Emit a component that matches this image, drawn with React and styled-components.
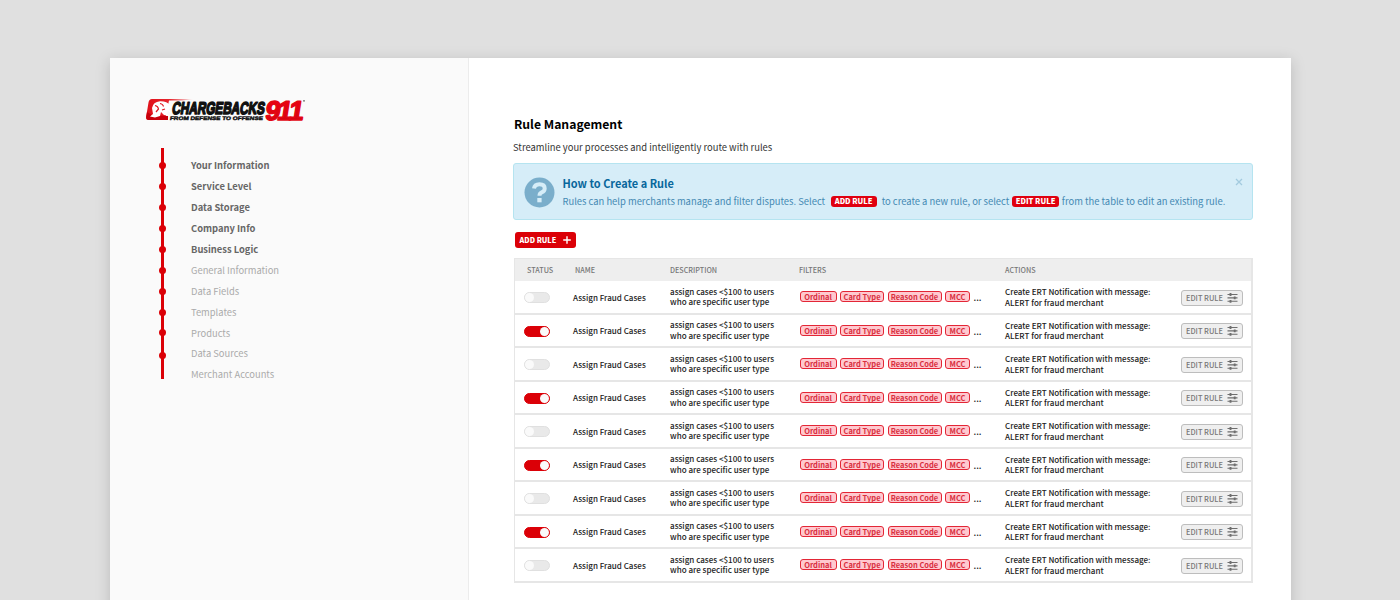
import React from 'react';
import styled, { createGlobalStyle } from 'styled-components';

const Global = createGlobalStyle`
  * { box-sizing: border-box; }
  html, body { margin: 0; height: 600px; overflow: hidden; }
  body {
    background: #e0e0e0;
    font-family: "Noto Sans CJK SC", "Noto Sans", sans-serif;
    color: #222;
  }
`;

const Page = styled.div`
  height: 600px;
  padding: 58px 109px 0 110px;
  overflow: hidden;
`;

const Card = styled.div`
  display: flex;
  height: 640px;
  background: #fff;
  box-shadow: 0 3px 14px rgba(0, 0, 0, 0.17);
`;

const Sidebar = styled.aside`
  width: 359px;
  flex: none;
  background: #fafafa;
  border-right: 1px solid #ececec;
  padding: 38px 0 0 34px;
`;

const Logo = styled.svg`
  display: block;
  width: 164px;
  height: 28px;
  overflow: visible;
`;

const Nav = styled.nav`
  display: flex;
  margin: 24px 0 0 15px;
`;

const Rail = styled.div`
  width: 7px;
  height: 231px;
  padding-top: 14px;
  background: linear-gradient(#db0007, #db0007) 2px 0 / 3px 100% no-repeat;
`;

const Dot = styled.div`
  width: 7px;
  height: 7px;
  border-radius: 50%;
  background: #db0007;
  margin-bottom: ${(p) => p.$gap}px;
`;

const NavList = styled.div`
  margin: 7px 0 0 25px;
`;

const NavItem = styled.div`
  height: 20.95px;
  line-height: 21.6px;
  font-size: 9.4px;
  white-space: nowrap;
  font-weight: ${(p) => (p.$active ? 700 : 400)};
  color: ${(p) => (p.$active ? '#666' : '#aaa')};
`;

const Main = styled.main`
  padding: 55px 0 0 44px;
  width: 784px;
`;

const Title = styled.h1`
  margin: 0 0 0 1px;
  font-size: 12.2px;
  line-height: 22px;
  font-weight: 700;
  color: #000;
`;

const Subtitle = styled.p`
  margin: 3px 0 0;
  font-size: 9.42px;
  line-height: 18px;
  color: #333;
`;

const Notice = styled.section`
  display: flex;
  position: relative;
  margin-top: 7px;
  height: 57px;
  width: 740px;
  padding: 13px 0 0 10px;
  background: #d6edf8;
  border: 1px solid #b5e4f0;
  border-radius: 3px;
`;

const NoticeBody = styled.div`
  margin: -1px 0 0 7.5px;
`;

const NoticeTitle = styled.h2`
  margin: -2px 0 0;
  font-size: 10.95px;
  line-height: 18px;
  font-weight: 700;
  color: #08679c;
`;

const NoticeText = styled.div`
  display: flex;
  align-items: center;
  height: 18px;
  font-size: 9.41px;
  line-height: 18px;
  white-space: nowrap;
  color: #4489b3;
`;

const Pill = styled.span`
  flex: none;
  height: 11px;
  line-height: 10.6px;
  width: ${(p) => p.$w}px;
  text-align: center;
  margin: 0 ${(p) => p.$after}px 0 ${(p) => p.$before}px;
  border-radius: 3px;
  background: #e0000f;
  color: #fff;
  font-size: 7.5px;
  font-weight: 900;
`;

const Close = styled.svg`
  position: absolute;
  top: 14px;
  right: 9px;
  width: 8px;
  height: 8px;
`;

const AddButton = styled.button`
  display: flex;
  align-items: center;
  justify-content: space-between;
  margin: 12px 0 0 2px;
  width: 61px;
  height: 16px;
  padding: 0 5.5px 0 4.5px;
  border: 0;
  border-radius: 3px;
  background: #db0007;
  color: #fff;
  font: 900 7.3px/16px "Noto Sans CJK SC", sans-serif;
`;

const Table = styled.div`
  margin: 10px 0 0 1px;
  width: 739px;
  border: solid #e6e6e6;
  border-width: 1px 2px 0 1px;
`;

const Row = styled.div`
  display: grid;
  grid-template-columns: 58px 97px 129px 206px 176px 70px;
  align-items: center;
  height: 33.5px;
  border-bottom: 2px solid #e6e6e6;
  font-size: 8.05px;
  line-height: 10.6px;
  font-weight: 500;
  white-space: nowrap;
`;

const HeadRow = styled(Row)`
  height: 22px;
  background: #eee;
  border-bottom: 0;
  color: #777;
  font-size: 7.2px;
`;

const HeadCell = styled.div`
  padding-left: ${(p) => p.$inset || 0}px;
`;

const Cell = styled.div`
  padding-top: ${(p) => p.$drop}px;
`;

const Toggle = styled.div`
  display: flex;
  justify-content: ${(p) => (p.$on ? 'flex-end' : 'flex-start')};
  width: 26px;
  height: 11px;
  margin: 2px 0 0 9px;
  border-radius: 6px;
  border: 1px solid ${(p) => (p.$on ? '#db0007' : '#e0e0e0')};
  background: ${(p) => (p.$on ? '#db0007' : '#e9e9e9')};
`;

const Knob = styled.div`
  width: 9px;
  height: 9px;
  border-radius: 50%;
  background: #fafafa;
`;

const Tags = styled.div`
  display: flex;
  gap: 3.5px;
  align-items: center;
  margin-left: 0.5px;
`;

const Tag = styled.span`
  flex: none;
  width: ${(p) => p.$w}px;
  height: 11.4px;
  line-height: 9px;
  text-align: center;
  border: 1px solid #e32636;
  border-radius: 3px;
  background: #ffc9cf;
  color: #d9303f;
  font-size: 7.5px;
  font-weight: 700;
`;

const More = styled.span`
  padding-top: 4px;
  font-size: 9px;
`;

const EditButton = styled.button`
  display: flex;
  align-items: center;
  justify-content: space-between;
  width: 62px;
  height: 16px;
  margin-top: 1.6px;
  padding: 0 4px;
  border: 1px solid #bdbdbd;
  border-radius: 3px;
  background: #efefef;
  color: #777;
  font: 500 7.4px/14px "Noto Sans CJK SC", sans-serif;
`;

const steps = ['Your Information', 'Service Level', 'Data Storage', 'Company Info', 'Business Logic',
  'General Information', 'Data Fields', 'Templates', 'Products', 'Data Sources', 'Merchant Accounts'];
const dotGaps = [14, 14, 14, 14, 13.5, 14, 14, 13.7, 15.6, 0];
const tags = [['Ordinal', 37], ['Card Type', 44], ['Reason Code', 54], ['MCC', 25]];
const rules = [false, true, false, true, false, true, false, true, false];

const BrandLogo = () => (
  <Logo viewBox="0 0 164 28">
    <defs>
      <linearGradient id="swoosh" x1="0" x2="1">
        <stop offset="0" stopColor="#e0101a" />
        <stop offset="0.5" stopColor="#e6262e" />
        <stop offset="1" stopColor="#fafafa" />
      </linearGradient>
      <linearGradient id="digits" x1="0" x2="0" y1="0" y2="1">
        <stop offset="0" stopColor="#f5000f" />
        <stop offset="1" stopColor="#cf0510" />
      </linearGradient>
    </defs>
    <path d="M8 3H50L38 4.600H25L21 24H5Q1.500 24 2.200 20.500L4.500 6.500Q5 3 8 3Z" fill="url(#swoosh)" />
    <path d="M3 16L8 19 24 20 24 24H5Q1.800 24 2.200 20.500Z" fill="#c8000b" />
    <path d="M8 12Q9 6 16 5.200Q23 5 26 9L28 12 25 13 27 17 24 15 23 18 26 20 20 19 17 16 16 20 11 21.500 6 20.500 9 18Z" fill="#fff" />
    <path d="M11 9.500Q14 10 14.500 13L12 16M16 7.500Q19 8 19.500 10.500M18 14L21 13" fill="none" stroke="#df1720" strokeWidth="1.200" />
    <g transform="skewX(-9)" fontFamily="Liberation Sans" fontWeight="700" strokeLinejoin="round">
      <text x="30.500" y="18.400" textLength="92.500" lengthAdjust="spacingAndGlyphs" fontSize="17" fill="#111" stroke="#111" strokeWidth="1.600">CHARGEBACKS</text>
      <text x="29.500" y="24" textLength="93" lengthAdjust="spacingAndGlyphs" fontSize="5" fill="#111" stroke="#111" strokeWidth="0.400">FROM DEFENSE TO OFFENSE</text>
      <text x="124 136 147.500" y="23.500" fontSize="27" fill="url(#digits)" stroke="#e30613" strokeWidth="1.600">911</text>
    </g>
    <circle cx="160" cy="4.800" r="0.900" fill="#666" />
  </Logo>
);

const HelpIcon = () => (
  <svg width="31" height="31" viewBox="0 0 31 31">
    <circle cx="15.500" cy="15.500" r="15" fill="#7aaecb" />
    <path d="M10 11.500Q10.500 7.200 15.500 7.200Q20.700 7.200 20.700 11.400Q20.700 14 17.700 15.300Q15.500 16.300 15.500 18.700" fill="none" stroke="#d6edf8" strokeWidth="4" />
    <rect x="13.300" y="21" width="4.300" height="4.300" fill="#d6edf8" />
  </svg>
);

const Sliders = () => (
  <svg width="11" height="10" viewBox="0 0 11 10" stroke="#6e6e6e" fill="none">
    <path d="M0.500 1.500H10.500M0.500 4.900H10.500M0.500 8.300H10.500" strokeWidth="1.100" />
    <path d="M3.500 0.100V2.900M7.700 3.500V6.300M3.500 6.900V9.700" strokeWidth="1.900" />
  </svg>
);

export default function App() {
  return (
    <Page>
      <Global />
      <Card>
        <Sidebar>
          <BrandLogo />
          <Nav>
            <Rail>{dotGaps.map((g, i) => <Dot key={i} $gap={g} />)}</Rail>
            <NavList>{steps.map((s, i) => <NavItem key={s} $active={i < 5}>{s}</NavItem>)}</NavList>
          </Nav>
        </Sidebar>
        <Main>
          <Title>Rule Management</Title>
          <Subtitle>Streamline your processes and intelligently route with rules</Subtitle>
          <Notice>
            <HelpIcon />
            <NoticeBody>
              <NoticeTitle>How to Create a Rule</NoticeTitle>
              <NoticeText>
                Rules can help merchants manage and filter disputes. Select
                <Pill $w={46} $before={5.5} $after={5}>ADD RULE</Pill>
                to create a new rule, or select
                <Pill $w={46.5} $before={3} $after={3}>EDIT RULE</Pill>
                from the table to edit an existing rule.
              </NoticeText>
            </NoticeBody>
            <Close viewBox="0 0 8 8"><path d="M1 1L7 7M7 1L1 7" stroke="#a3cadf" strokeWidth="1.300" /></Close>
          </Notice>
          <AddButton>
            ADD RULE
            <svg width="8" height="8" viewBox="0 0 8 8"><path d="M4 0.200V7.800M0.200 4H7.800" stroke="#fff" strokeWidth="1.400" /></svg>
          </AddButton>
          <Table>
            <HeadRow>
              <HeadCell $inset={12}>STATUS</HeadCell>
              <HeadCell $inset={2}>NAME</HeadCell>
              <HeadCell>DESCRIPTION</HeadCell>
              <HeadCell>FILTERS</HeadCell>
              <HeadCell>ACTIONS</HeadCell>
            </HeadRow>
            {rules.map((on, i) => (
              <Row key={i}>
                <Toggle $on={on}><Knob /></Toggle>
                <Cell $drop={3}>Assign Fraud Cases</Cell>
                <Cell $drop={1.2}>assign cases &lt;$100 to users<br />who are specific user type</Cell>
                <Tags>{tags.map(([t, w]) => <Tag key={t} $w={w}>{t}</Tag>)}<More>...</More></Tags>
                <Cell $drop={2.4}>Create ERT Notification with message:<br />ALERT for fraud merchant</Cell>
                <EditButton>EDIT RULE<Sliders /></EditButton>
              </Row>
            ))}
          </Table>
        </Main>
      </Card>
    </Page>
  );
}
